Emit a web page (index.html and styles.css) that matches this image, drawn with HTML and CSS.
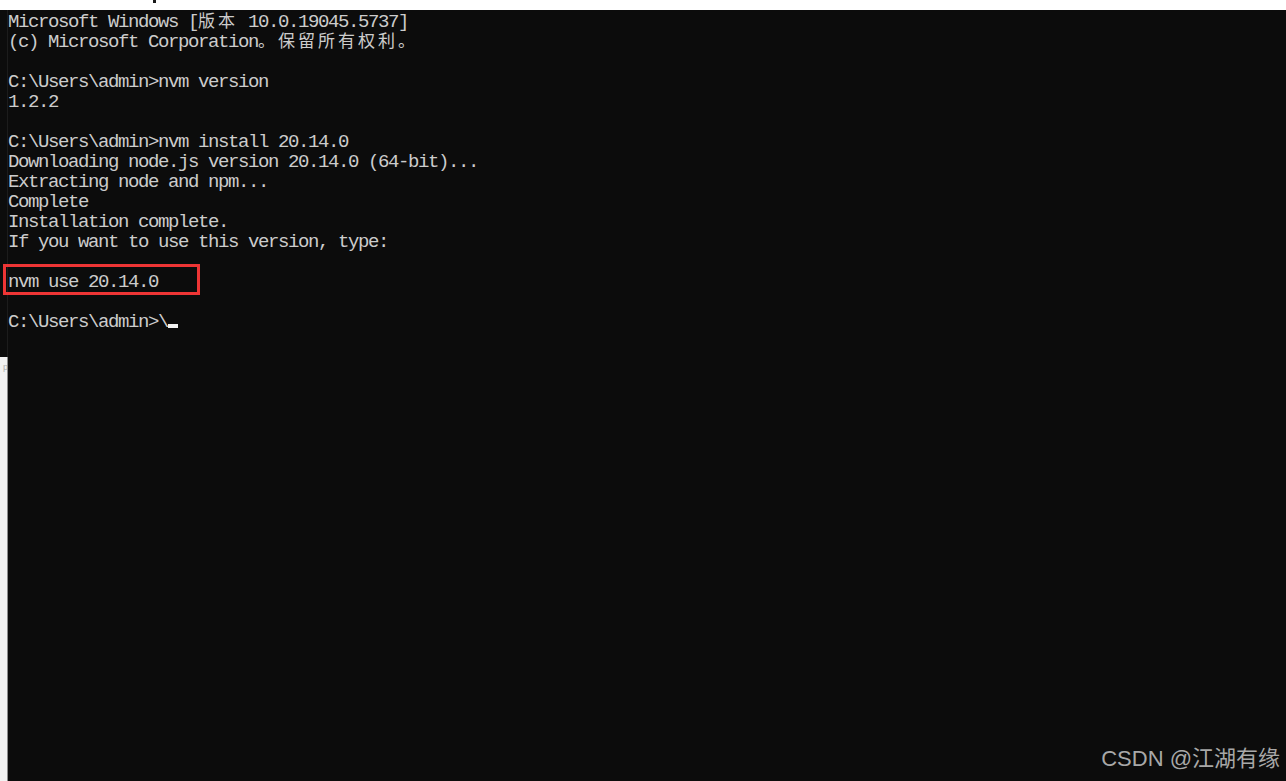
FILE: index.html
```html
<!DOCTYPE html>
<html lang="zh-CN">
<head>
<meta charset="utf-8">
<title>Command Prompt</title>
<link rel="stylesheet" href="styles.css">
</head>
<body>
<div class="page">
  <div class="topband"><span class="topmark"></span></div>
  <div class="row">
    <div class="sidestrip">
      <div class="side-dark"></div>
      <div class="side-light"><span class="side-frag">p</span></div>
    </div>
    <div class="console">
      <div class="line">Microsoft Windows [<span class="cjk">版本</span> 10.0.19045.5737]</div>
      <div class="line">(c) Microsoft Corporation<span class="cjk">。保留所有权利。</span></div>
      <div class="line"></div>
      <div class="line">C:\Users\admin&gt;nvm version</div>
      <div class="line">1.2.2</div>
      <div class="line"></div>
      <div class="line">C:\Users\admin&gt;nvm install 20.14.0</div>
      <div class="line">Downloading node.js version 20.14.0 (64-bit)...</div>
      <div class="line">Extracting node and npm...</div>
      <div class="line">Complete</div>
      <div class="line">Installation complete.</div>
      <div class="line">If you want to use this version, type:</div>
      <div class="line"></div>
      <div class="line">nvm use 20.14.0</div>
      <div class="line"></div>
      <div class="line">C:\Users\admin&gt;\<span class="cursor"></span></div>
    </div>
  </div>
  <div class="highlight"></div>
  <div class="watermark">CSDN @<span class="wm-cjk">江湖有缘</span></div>
</div>
</body>
</html>
```
FILE: styles.css
```css
html, body {
  margin: 0;
  padding: 0;
}
body {
  width: 1286px;
  height: 781px;
  overflow: hidden;
  background: #0c0c0c;
}
.page {
  position: relative;
  width: 1286px;
  height: 781px;
  display: flex;
  flex-direction: column;
}
.topband {
  height: 10px;
  background: #ffffff;
  flex: none;
  display: flex;
}
.topmark {
  margin-left: 153px;
  width: 3px;
  height: 3px;
  background: #1a1a1a;
}
.row {
  flex: 1;
  display: flex;
}
.sidestrip {
  width: 8px;
  flex: none;
  display: flex;
  flex-direction: column;
}
.side-dark {
  height: 347px;
  background: #0c0c0c;
  border-right: 1px solid #1c1c1c;
}
.side-light {
  flex: 1;
  background: #f2f2f2;
  border-right: 1px solid #8c8c8c;
  overflow: hidden;
}
.side-frag {
  display: block;
  font-family: "Liberation Sans", sans-serif;
  font-size: 9px;
  line-height: 9px;
  color: #b0b0b0;
  margin-top: 6px;
  margin-left: 3px;
}
.console {
  flex: 1;
  padding-top: 2px;
  background: #0c0c0c;
  color: #cccccc;
  font-family: "Liberation Mono", monospace;
  font-size: 19px;
  letter-spacing: -1.4px;
}
.line {
  height: 20px;
  line-height: 20px;
  white-space: pre;
}
.cjk {
  font-family: "Noto Sans CJK SC", sans-serif;
  font-size: 17px;
  line-height: 16px;
  letter-spacing: 3px;
}
.cursor {
  display: inline-block;
  width: 10px;
  height: 4px;
  background: #f2f2f2;
  vertical-align: -1px;
}
.highlight {
  position: absolute;
  left: 3px;
  top: 264px;
  width: 191px;
  height: 25px;
  border: 3px solid #ee3535;
}
.watermark {
  position: absolute;
  right: 6px;
  bottom: 9px;
  font-family: "Liberation Sans", "Noto Sans CJK SC", sans-serif;
  font-size: 22px;
  line-height: 26px;
  color: #a8a8a8;
}
.wm-cjk {
  font-family: "Noto Sans CJK SC", sans-serif;
}
```
